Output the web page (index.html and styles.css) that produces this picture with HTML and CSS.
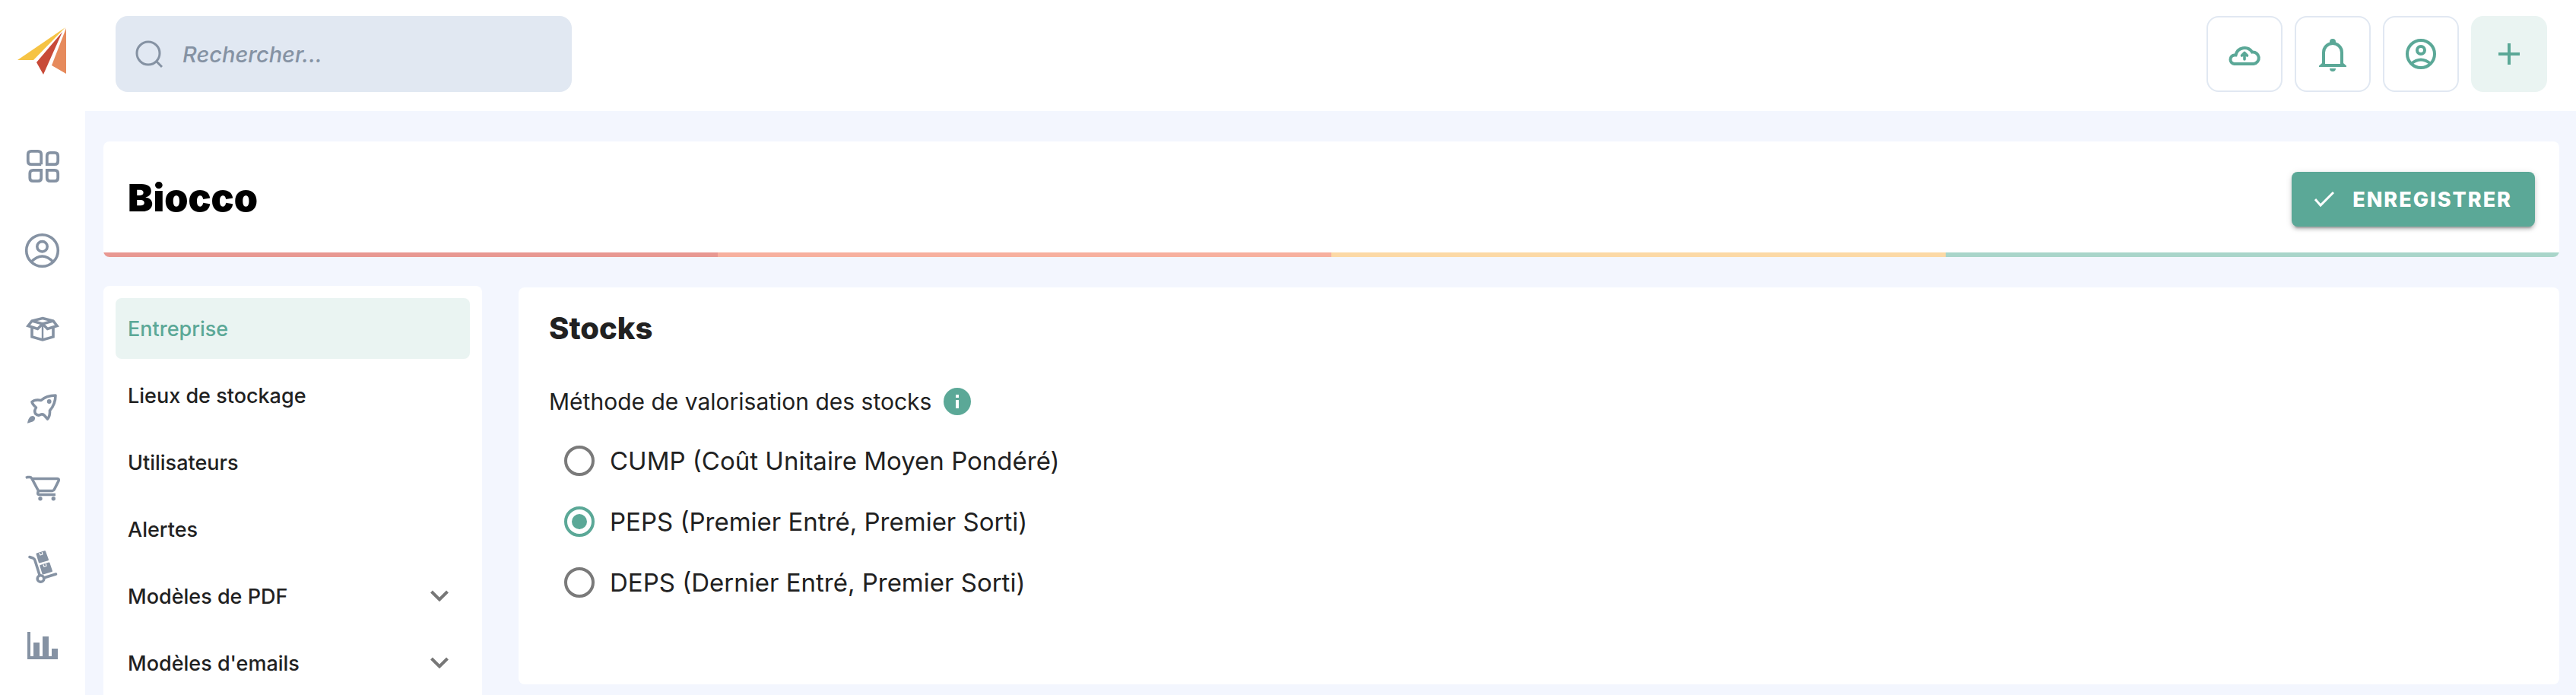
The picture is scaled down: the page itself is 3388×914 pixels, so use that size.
FILE: index.html
```html
<!DOCTYPE html>
<html lang="fr">
<head>
<meta charset="utf-8">
<title>Biocco</title>
<link rel="stylesheet" href="styles.css">
</head>
<body>
<div class="app">
  <aside class="rail">
    <a class="logo" href="#" aria-label="Accueil">
      <svg width="64" height="62" viewBox="0 0 64 62">
        <path fill="#f6c344" d="M63 0 0 43h21z"/>
        <path fill="#c84a38" d="M59 6 25 46l9 16z"/>
        <path fill="#e68a5c" d="M64 1v60L45 50z"/>
      </svg>
    </a>
    <nav class="rail-nav" aria-label="Navigation principale">
      <a class="rail-link rail-link-first" href="#" aria-label="Tableau de bord">
        <svg class="icon" viewBox="0 0 48 48" fill="none" stroke="currentColor" stroke-width="3.8">
          <path d="M22.200 21.200H9q-4.200 0-4.200-4.200V8q0-4.200 4.200-4.200h9q4.200 0 4.200 4.200v13.200M29.800 21.200H40q4.200 0 4.200-4.200V10q0-4.200-4.200-4.200h-6q-4.200 0-4.200 4.200zM22.200 28.800H11.500q-4.200 0-4.200 4.200v6q0 4.200 4.200 4.200h6.500q4.200 0 4.200-4.200zM29.800 28.800H40q4.200 0 4.200 4.200v6q0 4.200-4.200 4.200h-6q-4.200 0-4.200-4.200z"/>
        </svg>
      </a>
      <a class="rail-link" href="#" aria-label="Contacts">
        <svg class="icon" viewBox="0 0 48 48" fill="none" stroke="currentColor" stroke-width="3.600">
          <circle cx="23.500" cy="24.500" r="20.800"/><circle cx="23.500" cy="19.300" r="6.700"/><path d="M9 39.500q14.500-15 29 0"/>
        </svg>
      </a>
      <a class="rail-link" href="#" aria-label="Produits">
        <svg class="icon" viewBox="0 0 48 48" fill="none" stroke="currentColor" stroke-width="3.600">
          <path d="M24 9.500 38 13l5 6.500L30.500 23.500 24 17l-6.500 6.500L5 19.500 10 13zM10 13l14 4 14-4M10 22v12l14 4 14-4V22"/>
          <path stroke-width="2.400" d="M24 17v21"/>
        </svg>
      </a>
      <a class="rail-link" href="#" aria-label="Production">
        <svg class="icon" viewBox="0 0 48 48" fill="none" stroke="currentColor" stroke-width="3.600" stroke-linejoin="round">
          <path d="M41 7Q29 7 22 13.500Q14 12 10 15.500Q10.500 18.500 15.500 23Q12.500 27 14.500 31Q18 34.500 22 32Q25 31.500 26.500 33.500L30.500 38Q34 34 33.500 27Q41 18.500 41 7z"/>
          <circle cx="32.700" cy="15" r="2.900" fill="currentColor" stroke="none"/>
          <path fill="currentColor" stroke="none" d="M4 43.700Q5 37 8.500 34.500Q12.500 33 14 36Q14.500 39.500 11 41.500z"/>
        </svg>
      </a>
      <a class="rail-link" href="#" aria-label="Ventes">
        <svg class="icon" viewBox="0 0 48 48" fill="none" stroke="currentColor" stroke-width="3.600" stroke-linejoin="round">
          <path d="M2 11.500 4 10.500H7.500Q9 10.500 10 12.500L18.500 28.500H37Q38.500 28.500 39.500 26.500L45 15.500Q46 12.500 43.500 12.500H11M18.500 28.500Q16.500 33.500 19.500 33.500H41"/>
          <circle cx="21" cy="38.800" r="2.700" fill="currentColor" stroke="none"/><circle cx="38.300" cy="38.800" r="2.700" fill="currentColor" stroke="none"/>
        </svg>
      </a>
      <a class="rail-link" href="#" aria-label="Achats">
        <svg class="icon" viewBox="0 0 48 48" fill="none" stroke="currentColor" stroke-width="3.600" stroke-linecap="round" stroke-linejoin="round">
          <path d="M7 11.500 11.500 13Q13.500 14 14 16L20 35M27 38.500 41.500 34"/>
          <circle cx="21.500" cy="40" r="4.300"/>
          <path fill="currentColor" stroke-width="2" d="M16.500 7.500 27 4.200 31 15.200 19.800 18.500zM21.300 23 32.500 19.500 36 30 24.500 33.500z"/>
          <path stroke="#fff" stroke-width="1.200" d="M20 6.500l1 2.500 3-1-.700-2.500M25 21.700l1 2.500 3-1-.700-2.500"/>
        </svg>
      </a>
      <a class="rail-link" href="#" aria-label="Statistiques">
        <svg class="icon" viewBox="0 0 48 48" fill="currentColor">
          <path d="M4 6h4v32h4V20h8v18h4V12h8v26h4V28h8v14H4z"/>
        </svg>
      </a>
    </nav>
  </aside>

  <div class="page">
    <header class="topbar">
      <label class="search">
        <svg class="search-icon" viewBox="0 0 36 36" fill="none" stroke="currentColor" stroke-width="3">
          <circle cx="17" cy="17" r="15"/><path d="m28 28 7 7"/>
        </svg>
        <input class="search-input" type="text" placeholder="Rechercher..." aria-label="Rechercher">
      </label>
      <div class="actions">
        <button class="action" type="button" aria-label="Importer">
          <svg class="icon" viewBox="0 0 48 48" fill="none" stroke="currentColor" stroke-width="4">
            <path d="M10.500 37H36a7.800 7.800 0 1 0-2-15.500A11.800 11.800 0 0 0 12.500 25.500H10.500a5.800 5.800 0 0 0 0 11.500z"/>
            <path stroke-width="3.600" stroke-linecap="round" stroke-linejoin="round" d="M24 31v-8M20.500 26l3.500-3.500 3.500 3.500"/>
          </svg>
        </button>
        <button class="action" type="button" aria-label="Notifications">
          <svg class="icon" viewBox="0 0 48 48" fill="currentColor">
            <path fill="none" stroke="currentColor" stroke-width="4" d="M12 39V22a12 12 0 0 1 24 0v17"/>
            <path d="M20 10V8a4 4 0 0 1 8 0v2zM10 36l-4 3.500V41h36v-1.500L38 36v1H10zM20 43h8a4 4 0 0 1-8 0z"/>
          </svg>
        </button>
        <button class="action" type="button" aria-label="Mon compte">
          <svg class="icon" viewBox="0 0 48 48" fill="none" stroke="currentColor" stroke-width="4">
            <circle cx="24" cy="24" r="18"/><circle cx="24" cy="19" r="5"/><path d="M11 37q13-11 26 0"/>
          </svg>
        </button>
        <button class="action action-add" type="button" aria-label="Ajouter">
          <svg class="icon" viewBox="0 0 48 48" fill="currentColor"><path d="M22 10h4v12h12v4H26v12h-4V26H10v-4h12z"/></svg>
        </button>
      </div>
    </header>

    <main class="content">
      <section class="title-card">
        <div class="title-row">
          <h1 class="title">Biocco</h1>
          <button class="save" type="button">
            <svg class="save-icon" viewBox="0 0 26 22" fill="none" stroke="currentColor" stroke-width="3"><path d="m1 11 7 8L25 2"/></svg>
            ENREGISTRER
          </button>
        </div>
        <div class="stripes"><span class="stripe red"></span><span class="stripe coral"></span><span class="stripe amber"></span><span class="stripe mint"></span></div>
      </section>

      <div class="columns">
        <nav class="menu" aria-label="Paramètres">
          <a class="menu-item menu-item-active" href="#" aria-current="page">Entreprise</a>
          <a class="menu-item" href="#">Lieux de stockage</a>
          <a class="menu-item" href="#">Utilisateurs</a>
          <a class="menu-item" href="#">Alertes</a>
          <button class="menu-item" type="button">Modèles de PDF
            <svg class="chevron" viewBox="0 0 24 16" fill="none" stroke="currentColor" stroke-width="4"><path d="m1.500 2 10.500 10.500L22.500 2"/></svg>
          </button>
          <button class="menu-item" type="button">Modèles d'emails
            <svg class="chevron" viewBox="0 0 24 16" fill="none" stroke="currentColor" stroke-width="4"><path d="m1.500 2 10.500 10.500L22.500 2"/></svg>
          </button>
        </nav>

        <section class="panel">
          <h2 class="panel-title">Stocks</h2>
          <div class="field-label">
            <span id="methode">Méthode de valorisation des stocks</span>
            <svg class="info" viewBox="0 0 36 36" aria-hidden="true"><circle cx="18" cy="18" r="18" fill="currentColor"/><path fill="#fff" d="M16 9h4v4h-4zM16 16h4v11h-4z"/></svg>
          </div>
          <div class="options" role="radiogroup" aria-labelledby="methode">
            <label class="option"><input class="radio" type="radio" name="methode">CUMP (Coût Unitaire Moyen Pondéré)</label>
            <label class="option"><input class="radio" type="radio" name="methode" checked>PEPS (Premier Entré, Premier Sorti)</label>
            <label class="option"><input class="radio" type="radio" name="methode">DEPS (Dernier Entré, Premier Sorti)</label>
          </div>
        </section>
      </div>
    </main>
  </div>
</div>
</body>
</html>
```
FILE: styles.css
```css
:root {
  --green: #5ba897;
  --green-soft: #eaf4f2;
  --slate: #8592a3;
  --line: #e1e8f2;
  --ink: #212121;
}

* { box-sizing: border-box; }

body {
  margin: 0;
  background: #f3f6fe;
  color: var(--ink);
  font-family: Inter, "Open Sans", sans-serif;
}

button { font-family: inherit; cursor: pointer; }

.app {
  display: flex;
  min-height: 100vh;
}

.icon { display: block; width: 48px; height: 48px; }

.rail {
  flex: none;
  width: 112px;
  background: #fff;
}

.logo {
  display: block;
  padding: 36px 0 0 23px;
}

.logo svg { display: block; }

.rail-nav { padding-top: 63px; }

.rail-link {
  display: flex;
  align-items: center;
  justify-content: center;
  height: 104px;
  color: var(--slate);
}

.rail-link-first { height: 116px; }

.page {
  display: flex;
  flex: 1;
  flex-direction: column;
  min-width: 0;
}

.topbar {
  display: flex;
  align-items: flex-start;
  justify-content: space-between;
  height: 146px;
  padding: 21px 38px 0 40px;
  background: #fff;
}

.search {
  display: flex;
  align-items: center;
  gap: 26px;
  width: 600px;
  height: 100px;
  padding: 0 26px;
  border-radius: 16px;
  background: var(--line);
  color: var(--slate);
}

.search-icon { flex: none; width: 36px; height: 36px; }

.search-input {
  flex: 1;
  min-width: 0;
  padding: 0;
  border: 0;
  outline: 0;
  background: transparent;
  color: inherit;
  font: italic 500 29px Inter, sans-serif;
}

.search-input::placeholder { color: var(--slate); opacity: 1; }

.actions { display: flex; gap: 16px; }

.action {
  display: flex;
  align-items: center;
  justify-content: center;
  width: 100px;
  height: 100px;
  padding: 0;
  border: 2px solid var(--line);
  border-radius: 16px;
  background: #fff;
  color: var(--green);
}

.action-add {
  border-color: var(--green-soft);
  background: var(--green-soft);
}

.content {
  display: flex;
  flex: 1;
  flex-direction: column;
  gap: 38px;
  padding: 40px 22px 0 24px;
}

.title-card {
  overflow: hidden;
  border-radius: 8px;
  background: #fff;
}

.title-row {
  display: flex;
  align-items: flex-start;
  justify-content: space-between;
  padding: 40px 32px 34px;
}

.title {
  margin: 0;
  color: #000;
  font-size: 50px;
  font-weight: 900;
  line-height: 68px;
}

.save {
  display: flex;
  align-items: center;
  gap: 24px;
  height: 72px;
  padding: 0 30px;
  border: 0;
  border-radius: 8px;
  background: var(--green);
  box-shadow: 0 6px 2px -4px rgba(0, 0, 0, .2), 0 4px 4px rgba(0, 0, 0, .14), 0 2px 10px rgba(0, 0, 0, .12);
  color: #fff;
  font-size: 27px;
  font-weight: 800;
  letter-spacing: 2px;
}

.save-icon { width: 26px; height: 22px; }

.stripes { display: flex; height: 6px; }
.stripe { flex: 1; }
.red { background: #e89892; }
.coral { background: #f7b09f; }
.amber { background: #fcd9a6; }
.mint { background: #a9d5ca; }

.columns {
  display: flex;
  flex: 1;
  align-items: flex-start;
  gap: 48px;
}

.menu {
  display: flex;
  flex: none;
  flex-direction: column;
  align-self: stretch;
  gap: 8px;
  width: 498px;
  padding: 16px 16px 0;
  border-radius: 8px 8px 0 0;
  background: #fff;
}

.menu-item {
  display: flex;
  align-items: center;
  justify-content: space-between;
  height: 80px;
  padding: 0 28px 0 16px;
  border: 0;
  border-radius: 8px;
  background: transparent;
  color: var(--ink);
  font-size: 27px;
  font-weight: 500;
  text-decoration: none;
}

.menu-item-active {
  background: var(--green-soft);
  color: var(--green);
}

.chevron { width: 24px; height: 16px; overflow: visible; color: #777; }

.panel {
  flex: 1;
  min-width: 0;
  margin-top: 2px;
  padding: 30px 40px 94px;
  border-radius: 8px;
  background: #fff;
}

.panel-title {
  margin: 0;
  font-size: 40px;
  font-weight: 800;
  line-height: 48px;
}

.field-label {
  display: flex;
  align-items: center;
  gap: 16px;
  margin-top: 54px;
  font-size: 30px;
  line-height: 36px;
}

.info { width: 36px; height: 36px; color: var(--green); }

.options {
  display: flex;
  flex-direction: column;
  align-items: flex-start;
  margin-top: 20px;
  padding-left: 20px;
}

.option {
  display: flex;
  align-items: center;
  gap: 20px;
  height: 80px;
  font-size: 33px;
}

.radio {
  appearance: none;
  width: 40px;
  height: 40px;
  margin: 0;
  padding: 6px;
  border: 4px solid #7a7a7a;
  border-radius: 50%;
}

.radio:checked {
  border-color: var(--green);
  background: var(--green) content-box;
}
```
